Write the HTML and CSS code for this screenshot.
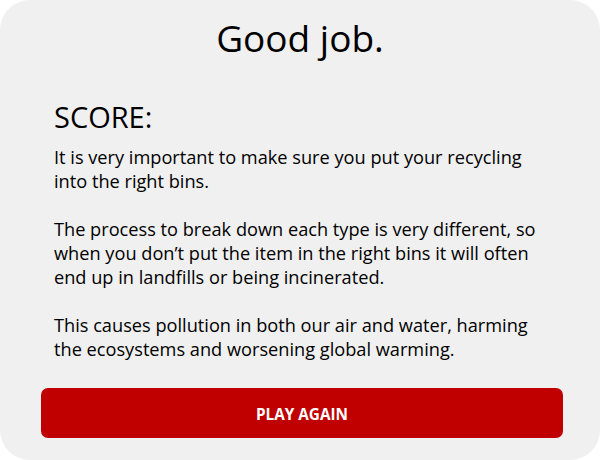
FILE: index.html
```html
<!DOCTYPE html>
<html lang="en">
<head>
<meta charset="utf-8">
<title>Good job</title>
<link rel="stylesheet" href="styles.css">
</head>
<body>
<main class="card">
  <h1 class="title">Good job.</h1>
  <section class="content">
    <h2 class="score">SCORE:</h2>
    <p class="para">It is very important to make sure you put your recycling into the right bins.</p>
    <p class="para">The process to break down each type is very different, so when you don’t put the item in the right bins it will often end up in landfills or being incinerated.</p>
    <p class="para">This causes pollution in both our air and water, harming the ecosystems and worsening global warming.</p>
  </section>
  <button class="play" type="button">PLAY AGAIN</button>
</main>
</body>
</html>
```
FILE: styles.css
```css
html, body {
  margin: 0;
  padding: 0;
  background: #ffffff;
}
body {
  font-family: "Open Sans", "Liberation Sans", sans-serif;
  color: #000;
}
.card {
  box-sizing: border-box;
  width: 600px;
  height: 460px;
  background: #f0f0f0;
  border-radius: 30px;
  padding-top: 13px;
  display: flex;
  flex-direction: column;
}
.title {
  margin: 0;
  font-size: 37px;
  line-height: 50px;
  font-weight: 400;
  text-align: center;
}
.content {
  padding: 35px 50px 0 54px;
  display: flex;
  flex-direction: column;
}
.score {
  margin: 0 0 9px;
  font-size: 29px;
  line-height: 38px;
  font-weight: 400;
}
.para {
  margin: 0 0 24px;
  font-size: 18.2px;
  line-height: 24px;
}
.para:last-child {
  margin-bottom: 0;
}
.play {
  margin: 27px 37px 0 41px;
  height: 50px;
  border: none;
  border-radius: 7px;
  background: #c00000;
  color: #fff;
  font-family: "Open Sans", "Liberation Sans", sans-serif;
  font-weight: 700;
  font-size: 15.3px;
  padding: 2px 0 0;
}
```
